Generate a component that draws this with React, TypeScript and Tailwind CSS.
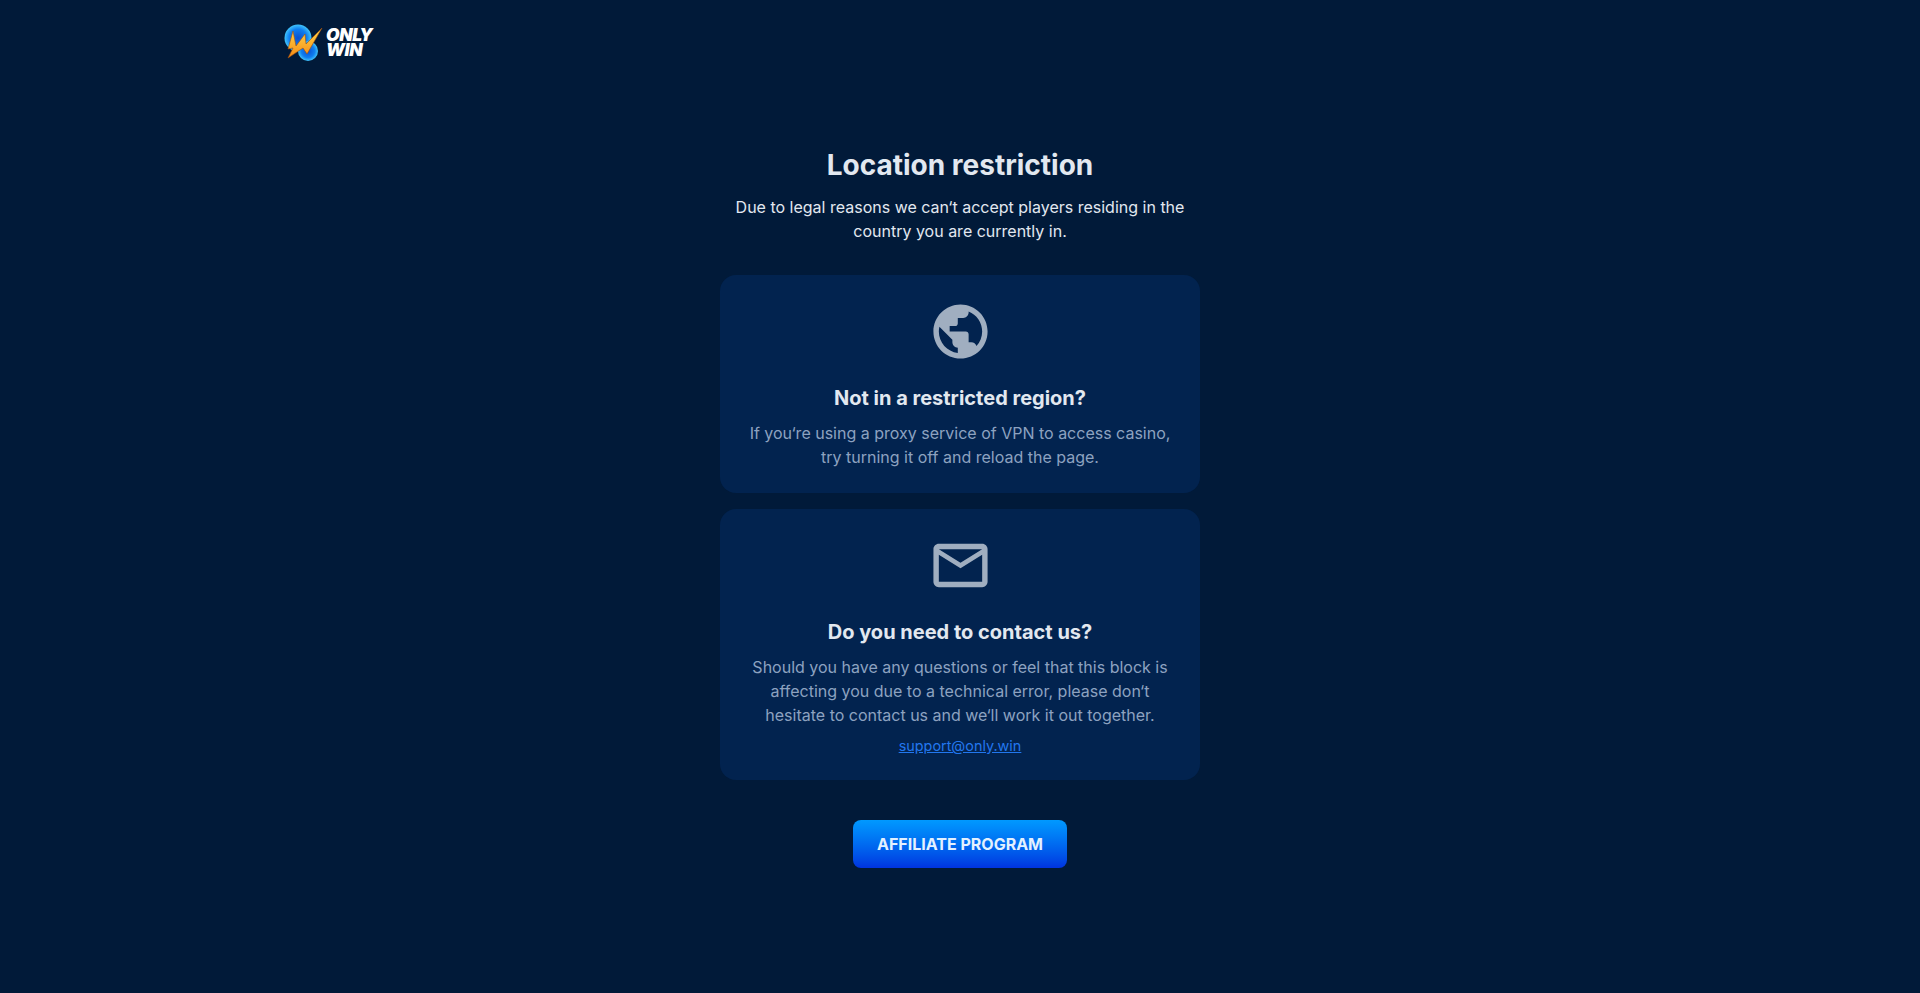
const sans = "font-['Inter',sans-serif]";

function Logo() {
  return (
    <div className="flex h-9 w-[92px] items-center">
      <svg viewBox="0 0 40 38" className="h-[38px] w-10 shrink-0">
        <defs>
          <radialGradient id="orb" cx="0.5" cy="0.5" r="0.55">
            <stop offset="0" stopColor="#0a4fd0" />
            <stop offset="0.6" stopColor="#0f7ff0" />
            <stop offset="1" stopColor="#4fd8ff" />
          </radialGradient>
          <linearGradient id="bolt" x1="0" y1="0" x2="0" y2="1">
            <stop offset="0" stopColor="#ffd84a" />
            <stop offset="1" stopColor="#f58a14" />
          </linearGradient>
        </defs>
        <circle cx="14" cy="15" r="13.5" fill="url(#orb)" />
        <circle cx="24" cy="28" r="10" fill="url(#orb)" />
        <path
          d="M9 8 L12 23 L21 11 L22 21 L38 5 L23 31 L19 25 L4 35 L9 25 L4 26 Z"
          fill="url(#bolt)"
          stroke="#a34c0a"
          strokeWidth="0.6"
          strokeLinejoin="round"
        />
      </svg>
      <div className="ml-[2px] shrink-0 font-['Inter',sans-serif] text-[17.5px] leading-[15px] font-black tracking-tight text-white italic">
        <div>ONLY</div>
        <div>WIN</div>
      </div>
    </div>
  );
}

function InfoCard({ title, icon, children, className }: { title: string; icon: React.ReactNode; children: React.ReactNode; className: string }) {
  return (
    <section className={`flex w-full flex-col items-center rounded-2xl bg-[#02234f] px-6 text-center ${className}`}>
      {icon}
      <h2 className="mt-5 text-xl leading-7 font-bold text-[#e2e8f0]">{title}</h2>
      {children}
    </section>
  );
}

export default function App() {
  return (
    <div className={`min-h-[993px] bg-[#011a39] ${sans}`}>
      <header className="mx-auto w-[1352px] pt-6">
        <Logo />
      </header>
      <main className="mx-auto mt-[87px] flex w-[480px] flex-col items-center">
        <h1 className="text-[28px] leading-9 font-bold text-[#e2e8f0]">Location restriction</h1>
        <p className="mt-3 w-[460px] text-center text-base leading-6 text-[#e2e8f0]">
          Due to legal reasons we can‘t accept players residing in the country you are currently in.
        </p>
        <InfoCard
          className="mt-8 h-[218px] pt-[24px]"
          title="Not in a restricted region?"
          icon={
            <svg viewBox="0 0 24 24" className="h-[65px] w-[65px]" fill="#a0aec0">
              <path d="M12 2C6.48 2 2 6.48 2 12s4.48 10 10 10 10-4.48 10-10S17.52 2 12 2zm-1 17.93c-3.95-.49-7-3.85-7-7.93 0-.62.08-1.21.21-1.79L9 15v1c0 1.1.9 2 2 2v1.93zm6.9-2.54c-.26-.81-1-1.39-1.9-1.39h-1v-3c0-.55-.45-1-1-1H8v-2h2c.55 0 1-.45 1-1V7h2c1.1 0 2-.9 2-2v-.41c2.93 1.19 5 4.06 5 7.41 0 2.08-.8 3.97-2.1 5.39z" />
            </svg>
          }
        >
          <p className="mt-[9px] text-base leading-6 text-[#8da2c0]">
            If you‘re using a proxy service of VPN to access casino, try turning it off and reload the page.
          </p>
        </InfoCard>
        <InfoCard
          className="mt-4 h-[271px] pt-[24px]"
          title="Do you need to contact us?"
          icon={
            <svg viewBox="0 0 24 24" className="h-[65px] w-[65px]" fill="#a0aec0">
              <path d="M20 4H4c-1.1 0-1.99.9-1.99 2L2 18c0 1.1.9 2 2 2h16c1.1 0 2-.9 2-2V6c0-1.1-.9-2-2-2zm0 14H4V8l8 5 8-5v10zm-8-7L4 6h16l-8 5z" />
            </svg>
          }
        >
          <p className="mt-[9px] text-base leading-6 text-[#8da2c0]">
            Should you have any questions or feel that this block is affecting you due to a technical error, please don‘t hesitate to contact us and we‘ll work it out together.
          </p>
          <a href="#" className="mt-[7px] text-[14.4px] leading-6 text-[#2277ee] underline">
            support@only.win
          </a>
        </InfoCard>
        <button className="mt-10 h-12 w-[214px] rounded-lg bg-gradient-to-b from-[#0199ff] to-[#0033e0] text-base font-bold text-[#e3f1ff]">
          AFFILIATE PROGRAM
        </button>
      </main>
    </div>
  );
}
